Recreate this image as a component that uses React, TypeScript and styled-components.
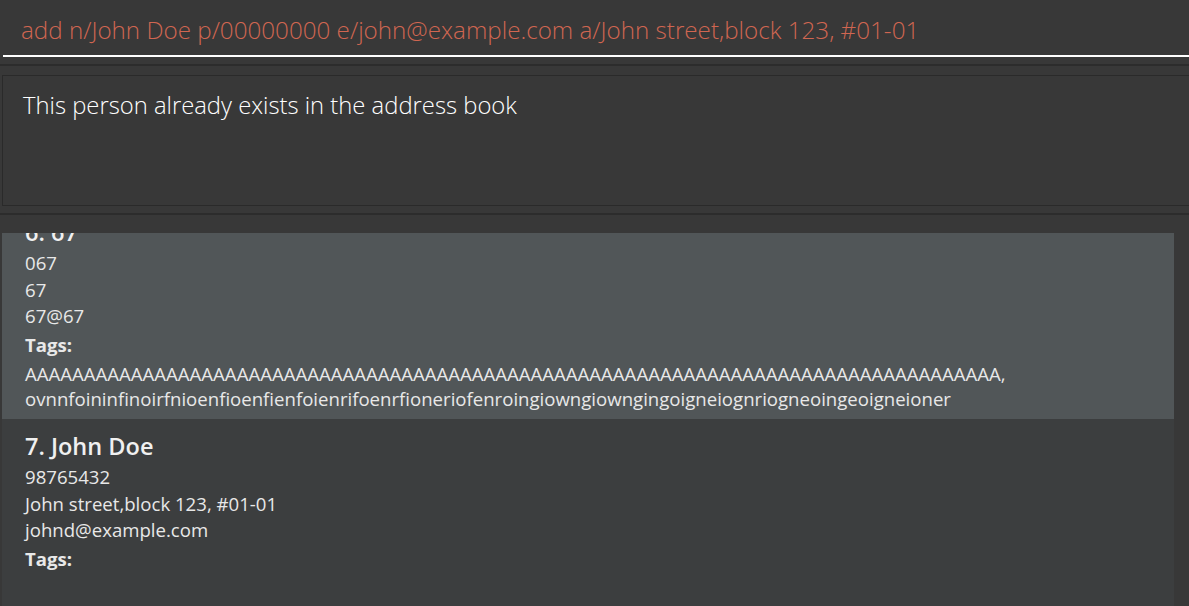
import React from "react";
import styled, { createGlobalStyle } from "styled-components";

const GlobalStyle = createGlobalStyle`
  html, body {
    margin: 0;
    padding: 0;
    background: #383838;
    overflow: hidden;
  }
  * { box-sizing: border-box; }
`;

const Window = styled.div`
  width: 1189px;
  height: 606px;
  background: #383838;
  display: flex;
  flex-direction: column;
  overflow: hidden;
  font-family: "Open Sans", "Noto Sans", sans-serif;
`;

const CommandArea = styled.div`
  display: flex;
  flex-direction: column;
`;

const CommandInput = styled.input`
  height: 55px;
  border: none;
  outline: none;
  background: #383838;
  padding: 4px 21px 0;
  margin: 0;
  font-family: "Open Sans", sans-serif;
  font-weight: 300;
  font-size: 24.2px;
  color: #d06651;
`;

const Underline = styled.div`
  height: 2px;
  margin-left: 3px;
  background: #ffffff;
`;

const ResultSection = styled.div`
  margin-top: 7px;
  border-top: 2px solid #2c2c2c;
  padding: 9px 0 7px 2px;
`;

const ResultBox = styled.div`
  height: 131px;
  border: 1px solid #2a2a2a;
  border-right: none;
  padding: 12px 20px;
  font-family: "Open Sans", sans-serif;
  font-weight: 300;
  font-size: 23.8px;
  line-height: 34px;
  color: #ffffff;
`;

const ListSection = styled.div`
  flex: 1;
  border-top: 2px solid #2c2c2c;
  padding: 18px 0 0 2px;
  display: flex;
  min-height: 0;
`;

const ListViewport = styled.div`
  width: 1172px;
  overflow: hidden;
`;

const ScrollContent = styled.div<{ $offset: number }>`
  margin-top: ${(p) => -p.$offset}px;
`;

const Card = styled.div<{ $odd: boolean }>`
  min-height: 214px;
  background: ${(p) => (p.$odd ? "#515658" : "#3c3e3f")};
  padding: 13px 24px 8px 23px;
  color: #e8e8e8;
`;

const Name = styled.div`
  font-size: 23.5px;
  font-weight: 600;
  line-height: 28px;
  color: #f0f0f0;
  margin-bottom: 4px;
`;

const Field = styled.div`
  font-size: 18.6px;
  line-height: 26.5px;
`;

const TagsLabel = styled.div`
  margin-top: 2px;
  font-size: 18.6px;
  font-weight: 700;
  line-height: 26px;
`;

const TagValues = styled.div`
  margin-top: 3px;
  min-height: 25px;
  font-size: 18.6px;
  line-height: 25px;
`;

const ScrollGutter = styled.div`
  flex: 1;
  background: #383838;
`;

type Person = {
  index: number;
  name: string;
  phone: string;
  address: string;
  email: string;
  tags: string[];
};

const people: Person[] = [
  {
    index: 6,
    name: "67",
    phone: "067",
    address: "67",
    email: "67@67",
    tags: [
      "A".repeat(83),
      "ovnnfoininfinoirfnioenfioenfienfoienrifoenrfioneriofenroingiowngiowngingoigneiognriogneoingeoigneioner",
    ],
  },
  {
    index: 7,
    name: "John Doe",
    phone: "98765432",
    address: "John street,block 123, #01-01",
    email: "johnd@example.com",
    tags: [],
  },
];

export default function App() {
  return (
    <Window>
      <GlobalStyle />
      <CommandArea>
        <CommandInput
          readOnly
          value="add n/John Doe p/00000000 e/john@example.com a/John street,block 123, #01-01"
        />
        <Underline />
      </CommandArea>
      <ResultSection>
        <ResultBox>This person already exists in the address book</ResultBox>
      </ResultSection>
      <ListSection>
        <ListViewport>
          <ScrollContent $offset={28}>
            {people.map((p) => (
              <Card key={p.index} $odd={p.index % 2 === 0}>
                <Name>
                  {p.index}. {p.name}
                </Name>
                <Field>{p.phone}</Field>
                <Field>{p.address}</Field>
                <Field>{p.email}</Field>
                <TagsLabel>Tags:</TagsLabel>
                <TagValues>{p.tags.join(", ")}</TagValues>
              </Card>
            ))}
          </ScrollContent>
        </ListViewport>
        <ScrollGutter />
      </ListSection>
    </Window>
  );
}
